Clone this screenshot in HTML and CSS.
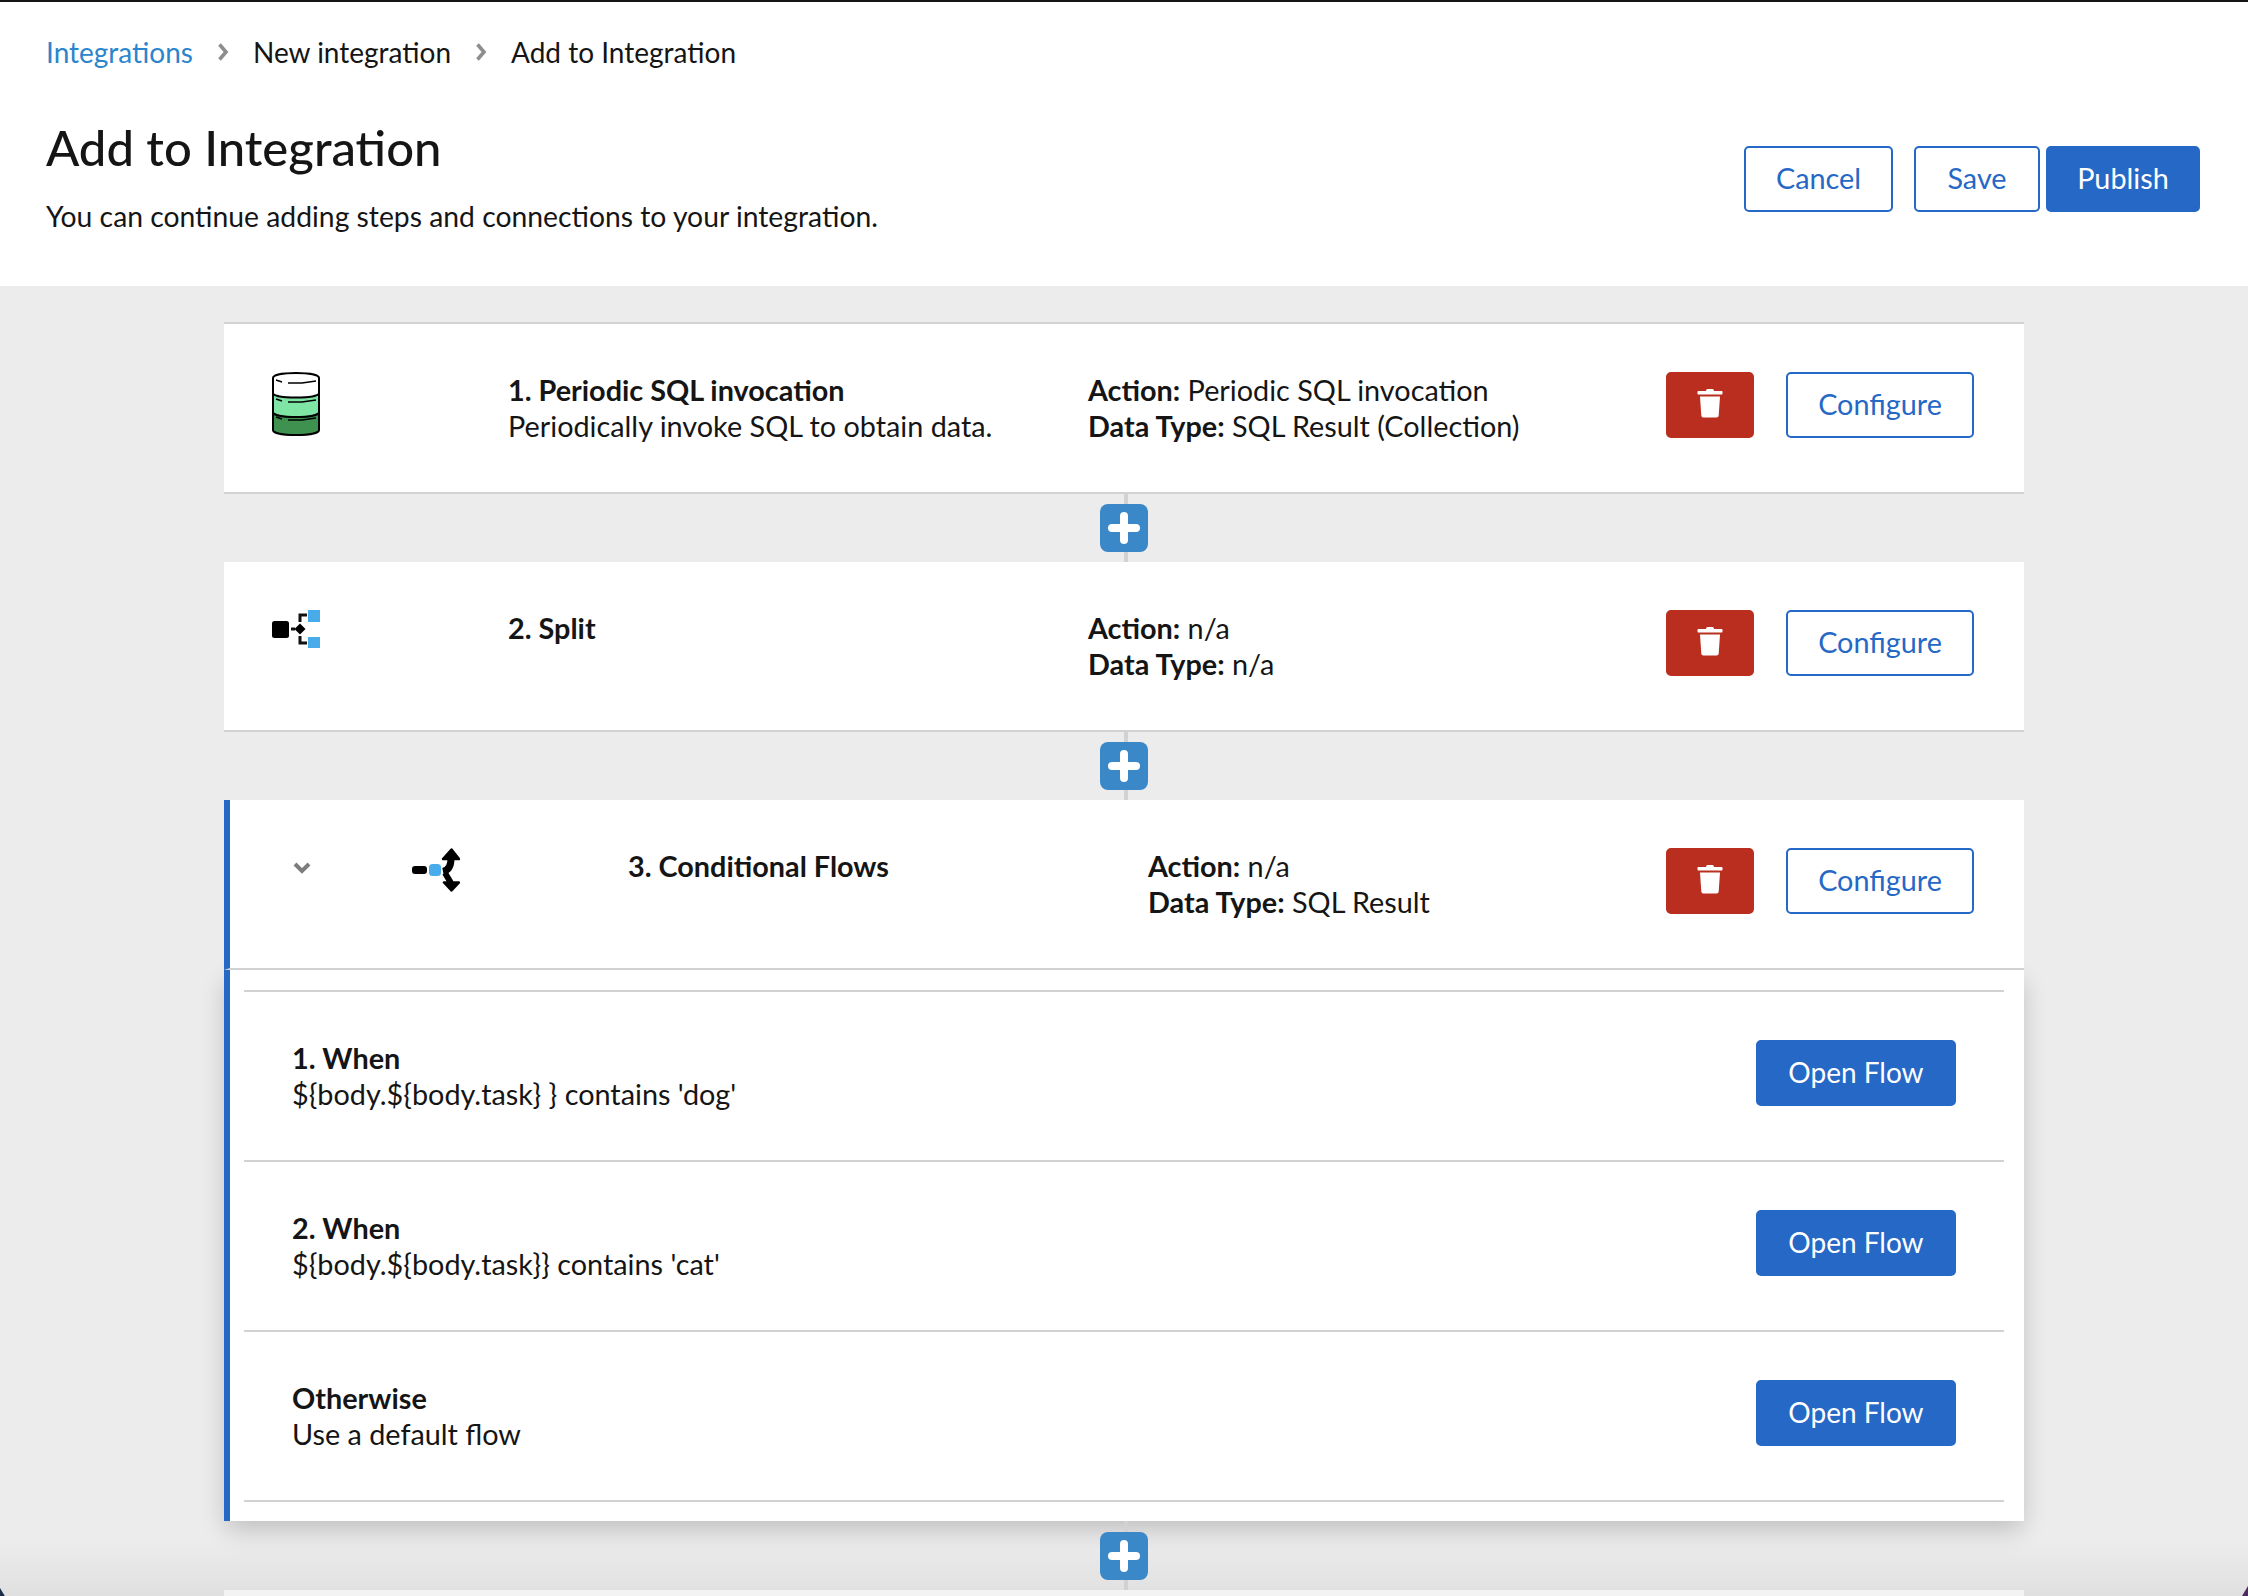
FILE: index.html
```html
<!DOCTYPE html>
<html lang="en">
<head>
    <meta charset="UTF-8">
    <title>Add to Integration</title>
    <link rel="stylesheet" href="styles.css">
</head>
<body>
    <header class="page-header">
        <nav class="breadcrumb">
            <a class="crumb-link">Integrations</a>
            <svg class="crumb-sep" viewBox="0 0 12 18"><path d="M2.500 1.500 9 9l-6.500 7.500" fill="none" stroke="#8b8d8f" stroke-width="3.600"/></svg>
            <span>New integration</span>
            <svg class="crumb-sep" viewBox="0 0 12 18"><path d="M2.500 1.500 9 9l-6.500 7.500" fill="none" stroke="#8b8d8f" stroke-width="3.600"/></svg>
            <span>Add to Integration</span>
        </nav>
        <div class="title-row">
            <div>
                <h1>Add to Integration</h1>
                <p class="subtitle">You can continue adding steps and connections to your integration.</p>
            </div>
            <div class="header-actions">
                <button class="btn btn-outline btn-cancel">Cancel</button>
                <button class="btn btn-outline btn-save">Save</button>
                <button class="btn btn-primary btn-publish">Publish</button>
            </div>
        </div>
    </header>

    <main class="flow">
        <section class="step step-first">
            <div class="step-icon">
                <svg width="48" height="64" viewBox="0 0 48 64">
                    <path d="M1 40h46v18c0 3-10 5-23 5S1 61 1 58z" fill="#3f9150" stroke="#000" stroke-width="2"/>
                    <path d="M1 22h46v18c0 3-10 5-23 5S1 43 1 40z" fill="#7fe5a4" stroke="#000" stroke-width="2"/>
                    <path d="M1 6c0-3 10-5 23-5s23 2 23 5v15c0 3-10 4.500-23 4.500S1 24 1 21z" fill="#fff" stroke="#000" stroke-width="2"/>
                    <path d="M4 8l6 2M16 11h14l14-2M4 27l6 2M16 30h14l14-2M4 45l6 2M16 48h14l14-2" fill="none" stroke="#000" stroke-width="1.500"/>
                </svg>
            </div>
            <div class="step-title">
                <strong>1. Periodic SQL invocation</strong><br>
                Periodically invoke SQL to obtain data.
            </div>
            <div class="step-action">
                <strong>Action:</strong> Periodic SQL invocation<br>
                <strong>Data Type:</strong> SQL Result (Collection)
            </div>
            <div class="step-buttons">
                <button class="btn btn-danger"><svg width="26" height="30" viewBox="0 0 26 30"><path d="M9 3c0-1.500 1-2 2-2h4c1 0 2 .5 2 2h7.500c.8 0 1 .5 1 1v1.500c0 .5-.2 1-1 1h-23c-.8 0-1-.5-1-1V4c0-.5.2-1 1-1zM3 8.500h20l-1.300 19c-.1 1.300-1 2-2 2H6.300c-1 0-1.900-.7-2-2z" fill="#fff"/></svg></button>
                <button class="btn btn-outline btn-configure">Configure</button>
            </div>
        </section>

        <div class="connector"><span class="add-step"></span></div>

        <section class="step">
            <div class="step-icon">
                <svg width="48" height="38" viewBox="0 0 48 38">
                    <rect x="0" y="11" width="17" height="17" rx="2.500" fill="#000"/>
                    <path d="M19 19h4M35 5h-7v7M28 26v7h7" fill="none" stroke="#111" stroke-width="3"/>
                    <path d="M28 13.500l5.500 5.500-5.500 5.500-5.500-5.500z" fill="#000"/>
                    <rect x="36" y="0" width="12" height="12" fill="#48aceb"/>
                    <rect x="36" y="27" width="12" height="11" fill="#48aceb"/>
                </svg>
            </div>
            <div class="step-title">
                <strong>2. Split</strong>
            </div>
            <div class="step-action">
                <strong>Action:</strong> n/a<br>
                <strong>Data Type:</strong> n/a
            </div>
            <div class="step-buttons">
                <button class="btn btn-danger"><svg width="26" height="30" viewBox="0 0 26 30"><path d="M9 3c0-1.500 1-2 2-2h4c1 0 2 .5 2 2h7.500c.8 0 1 .5 1 1v1.500c0 .5-.2 1-1 1h-23c-.8 0-1-.5-1-1V4c0-.5.2-1 1-1zM3 8.500h20l-1.300 19c-.1 1.300-1 2-2 2H6.300c-1 0-1.900-.7-2-2z" fill="#fff"/></svg></button>
                <button class="btn btn-outline btn-configure">Configure</button>
            </div>
        </section>

        <div class="connector"><span class="add-step"></span></div>

        <section class="step step-open">
            <svg class="chevron" width="18" height="12" viewBox="0 0 18 12"><path d="M2 2l7 7 7-7" fill="none" stroke="#7b7d7f" stroke-width="4"/></svg>
            <div class="step-icon step-icon-open">
                <svg width="48" height="44" viewBox="0 0 48 44">
                    <rect x="0" y="18" width="15" height="8" rx="3" fill="#000"/>
                    <rect x="17" y="16" width="12" height="12" rx="3.500" fill="#48aceb"/>
                    <path d="M31 23.500c5-1 8-5 8-13" fill="none" stroke="#000" stroke-width="7"/>
                    <path d="M39.500 1.500l7.500 9.500H31z" fill="#000" stroke="#000" stroke-width="2.500" stroke-linejoin="round"/>
                    <path d="M33 25l6 10" fill="none" stroke="#000" stroke-width="6"/>
                    <path d="M39.500 42.500l-7.500-8h15z" fill="#000" stroke="#000" stroke-width="2.500" stroke-linejoin="round"/>
                </svg>
            </div>
            <div class="step-title step-title-open">
                <strong>3. Conditional Flows</strong>
            </div>
            <div class="step-action">
                <strong>Action:</strong> n/a<br>
                <strong>Data Type:</strong> SQL Result
            </div>
            <div class="step-buttons">
                <button class="btn btn-danger"><svg width="26" height="30" viewBox="0 0 26 30"><path d="M9 3c0-1.500 1-2 2-2h4c1 0 2 .5 2 2h7.500c.8 0 1 .5 1 1v1.500c0 .5-.2 1-1 1h-23c-.8 0-1-.5-1-1V4c0-.5.2-1 1-1zM3 8.500h20l-1.300 19c-.1 1.300-1 2-2 2H6.300c-1 0-1.900-.7-2-2z" fill="#fff"/></svg></button>
                <button class="btn btn-outline btn-configure">Configure</button>
            </div>
        </section>
        <div class="conditions-panel">
            <div class="conditions">
                <div class="condition">
                    <div><strong>1. When</strong><br>${body.${body.task} } contains 'dog'</div>
                    <button class="btn btn-primary btn-flow">Open Flow</button>
                </div>
                <div class="condition">
                    <div><strong>2. When</strong><br>${body.${body.task}} contains 'cat'</div>
                    <button class="btn btn-primary btn-flow">Open Flow</button>
                </div>
                <div class="condition">
                    <div><strong>Otherwise</strong><br>Use a default flow</div>
                    <button class="btn btn-primary btn-flow">Open Flow</button>
                </div>
            </div>
        </div>

        <div class="connector connector-last"><span class="add-step"></span></div>

        <section class="step step-next"></section>
    </main>
    <span class="corner corner-left"></span>
    <span class="corner corner-right"></span>
</body>
</html>
```

FILE: styles.css
```css
* {
    margin: 0;
    padding: 0;
    box-sizing: border-box;
}

html, body {
    height: 1596px;
    overflow: hidden;
}

body {
    background: linear-gradient(#ececec 1540px, #e0e0e0 1596px);
    color: #151515;
    font-family: Lato, sans-serif;
    font-size: 28.800px;
    line-height: 36px;
    position: relative;
}

strong {
    font-weight: 700;
}

.page-header {
    height: 286px;
    background: #fff;
    border-top: 2px solid #151515;
    padding: 32px 48px 0 46px;
}

.breadcrumb {
    display: flex;
    align-items: center;
    gap: 24px;
    font-size: 28px;
}

.crumb-link {
    color: #2b85cc;
}

.crumb-sep {
    width: 12px;
    height: 18px;
}

.title-row {
    display: flex;
    justify-content: space-between;
    align-items: flex-start;
    margin-top: 48px;
}

h1 {
    font-size: 49px;
    line-height: 58px;
    font-weight: 500;
}

.subtitle {
    margin-top: 22px;
    font-size: 28.300px;
}

.header-actions {
    display: flex;
    margin-top: 28px;
}

.btn {
    height: 66px;
    border-radius: 5px;
    border: 2px solid #2568c6;
    font: inherit;
    padding-bottom: 2px;
    cursor: pointer;
}

.btn-outline {
    background: #fff;
    color: #2568c6;
}

.btn-primary {
    background: #2568c6;
    color: #fff;
}

.btn-danger {
    width: 88px;
    background: #b92e1f;
    border-color: #b92e1f;
    padding-bottom: 4px;
    display: flex;
    align-items: center;
    justify-content: center;
}

.btn-cancel { width: 149px; margin-right: 21px; }
.btn-save { width: 126px; margin-right: 6px; }
.btn-publish { width: 154px; }
.btn-configure { width: 188px; }
.btn-flow { width: 200px; font-size: 28px; }

.flow {
    width: 1800px;
    margin-left: 224px;
    padding-top: 36px;
}

.step {
    display: flex;
    background: #fff;
    height: 170px;
    padding: 48px 50px 0 48px;
    border-bottom: 2px solid #d2d2d2;
}

.step-first {
    height: 172px;
    border-top: 2px solid #d2d2d2;
}

.step-icon {
    width: 236px;
    flex-shrink: 0;
}

.step-icon svg {
    display: block;
}

.step-title {
    width: 580px;
    flex-shrink: 0;
}

.step-action {
    flex: 1;
}

.step-buttons {
    display: flex;
    gap: 32px;
}

.connector {
    height: 68px;
    display: flex;
    justify-content: center;
    align-items: center;
    position: relative;
}

.connector::before {
    content: "";
    width: 4px;
    height: 100%;
    margin-left: 4px;
    background: #d2d2d2;
}

.connector-last {
    height: 69px;
}

/* the add button sits over the connector line */
.add-step {
    position: absolute;
    left: 876px;
    top: 10px;
    width: 48px;
    height: 48px;
    border-radius: 8px;
    background: #3b88c8;
}

.add-step::before,
.add-step::after {
    content: "";
    position: absolute;
    background: #fff;
    border-radius: 4px;
}

.add-step::before {
    left: 8px;
    top: 20px;
    width: 32px;
    height: 8px;
}

.add-step::after {
    left: 20px;
    top: 8px;
    width: 8px;
    height: 32px;
}

.connector-last .add-step {
    top: 11px;
}

.step-open {
    border-left: 6px solid #2568c6;
    padding-left: 0;
    position: relative;
    z-index: 1;
}

.chevron {
    margin: 14px 0 0 63px;
    flex-shrink: 0;
}

.step-icon-open {
    width: 216px;
    margin-left: 101px;
}

.step-title-open {
    width: 520px;
}

.conditions-panel {
    border-left: 6px solid #2568c6;
    background: #fff;
    height: 551px;
    padding: 20px 20px 0 14px;
    box-shadow: 0 10px 24px -2px rgba(0, 0, 0, 0.2);
}

.conditions {
    border-top: 2px solid #d2d2d2;
}

.condition {
    display: flex;
    justify-content: space-between;
    height: 170px;
    padding: 48px 48px 0 48px;
    border-bottom: 2px solid #d2d2d2;
}

.step-next {
    height: 40px;
    background: #f3f3f3;
    border: none;
}

/* bits of desktop showing behind the rounded window corners */
.corner {
    position: absolute;
    bottom: 0;
    width: 6px;
    height: 10px;
}

.corner-left {
    left: 0;
    background: #1d2c4c;
    clip-path: polygon(0 20%, 0 100%, 80% 100%);
}

.corner-right {
    right: 0;
    background: #4a2c63;
    clip-path: polygon(100% 0, 100% 100%, 0 100%);
}
```
